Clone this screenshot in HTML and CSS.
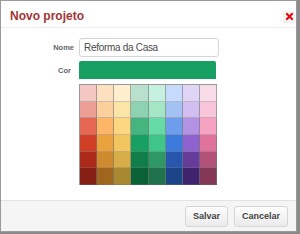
FILE: index.html
```html
<!DOCTYPE html>
<html>
<head>
<meta charset="utf-8">
<link rel="stylesheet" href="styles.css">
</head>
<body>
<div class="dialog">
  <div class="header">
    <div class="title">Novo projeto</div>
    <div class="close"><svg width="7" height="7" viewBox="0 0 8 8"><path d="M1 1L7 7M7 1L1 7" stroke="#e00" stroke-width="2.4" stroke-linecap="square"/></svg></div>
  </div>
  <div class="body">
    <div class="row">
      <div class="label">Nome</div>
      <div class="input">Reforma da Casa</div>
    </div>
    <div class="row row-cor">
      <div class="label">Cor</div>
      <div class="colcol">
        <div class="current"></div>
        <div class="palette">
          <div class="sw" style="background:#f4c7c3"></div><div class="sw" style="background:#fce0c0"></div><div class="sw" style="background:#fdefcd"></div><div class="sw" style="background:#b7e1cd"></div><div class="sw" style="background:#c6f0df"></div><div class="sw" style="background:#c6dafc"></div><div class="sw" style="background:#e1d5f5"></div><div class="sw" style="background:#fadce9"></div>
          <div class="sw" style="background:#ee9f95"></div><div class="sw" style="background:#fcd09c"></div><div class="sw" style="background:#fbe4a8"></div><div class="sw" style="background:#8dd3b2"></div><div class="sw" style="background:#a3e7c7"></div><div class="sw" style="background:#a4c1f4"></div><div class="sw" style="background:#d2bef1"></div><div class="sw" style="background:#f9c5d9"></div>
          <div class="sw" style="background:#e66752"></div><div class="sw" style="background:#fdb667"></div><div class="sw" style="background:#fbd781"></div><div class="sw" style="background:#46b47f"></div><div class="sw" style="background:#67dba7"></div><div class="sw" style="background:#6e9eeb"></div><div class="sw" style="background:#b492e3"></div><div class="sw" style="background:#f5a3c0"></div>
          <div class="sw" style="background:#d03f26"></div><div class="sw" style="background:#e9a23d"></div><div class="sw" style="background:#f1c65f"></div><div class="sw" style="background:#17a062"></div><div class="sw" style="background:#3fc588"></div><div class="sw" style="background:#3b79da"></div><div class="sw" style="background:#8e63cf"></div><div class="sw" style="background:#e0739a"></div>
          <div class="sw" style="background:#ad2a1b"></div><div class="sw" style="background:#cf8a2f"></div><div class="sw" style="background:#d7ad47"></div><div class="sw" style="background:#0f7e48"></div><div class="sw" style="background:#2d9765"></div><div class="sw" style="background:#2856ad"></div><div class="sw" style="background:#663c9b"></div><div class="sw" style="background:#b25177"></div>
          <div class="sw" style="background:#861f13"></div><div class="sw" style="background:#a1661e"></div><div class="sw" style="background:#a88830"></div><div class="sw" style="background:#0a6236"></div><div class="sw" style="background:#1f724b"></div><div class="sw" style="background:#1c4588"></div><div class="sw" style="background:#40236d"></div><div class="sw" style="background:#823755"></div>
        </div>
      </div>
    </div>
  </div>
  <div class="footer">
    <div class="btn">Salvar</div>
    <div class="btn">Cancelar</div>
  </div>
</div>
</body>
</html>
```
FILE: styles.css
```css
html, body {
  margin: 0;
  padding: 0;
  background: #8a8a8a;
}
body {
  width: 300px;
  height: 234px;
  overflow: hidden;
  font-family: "Liberation Sans", Arial, sans-serif;
}
.dialog {
  width: 295px;
  height: 230px;
  background: #fff;
  border: 1px solid #9a9a9a;
  display: flex;
  flex-direction: column;
}
.header {
  height: 26px;
  border-bottom: 1px solid #ececec;
  display: flex;
  align-items: center;
  justify-content: space-between;
  padding: 0 1px 0 9px;
}
.title {
  color: #a33535;
  font-weight: bold;
  font-size: 12px;
  margin-top: 4px;
}
.close {
  width: 12px;
  height: 12px;
  background: #f0f0f0;
  border-radius: 2px;
  display: flex;
  align-items: center;
  justify-content: center;
  margin-top: 5px;
}
.body {
  flex: 1;
  padding-top: 10px;
}
.row {
  display: flex;
  align-items: center;
}
.row-cor {
  align-items: flex-start;
  margin-top: 4px;
}
.label {
  width: 73px;
  text-align: right;
  font-size: 7.5px;
  font-weight: bold;
  color: #666;
  margin-right: 5px;
}
.row-cor .label {
  width: 70px;
  margin-right: 8px;
  margin-top: 5px;
}
.input {
  width: 134px;
  height: 17px;
  border: 1px solid #d4d4d4;
  border-radius: 3px;
  padding: 0 0 0 4px;
  font-size: 10px;
  letter-spacing: -0.3px;
  line-height: 17px;
  color: #4a4a4a;
}
.current {
  width: 137px;
  height: 18px;
  background: #17a062;
  border-radius: 2px 2px 0 0;
}
.palette {
  margin-top: 5px;
  width: 137px;
  display: grid;
  grid-template-columns: repeat(8, 1fr);
  grid-template-rows: repeat(6, 16.7px);
  background: #9a9a9a;
  border-left: 1px solid #999;
  border-top: 1px solid #999;
}
.sw {
  border-right: 1px solid rgba(120,120,120,0.6);
  border-bottom: 1px solid rgba(120,120,120,0.35);
}
.footer {
  height: 30px;
  background: #f5f5f5;
  border-top: 1px solid #e2e2e2;
  display: flex;
  justify-content: flex-end;
  align-items: center;
  gap: 6px;
  padding-right: 8px;
}
.btn {
  height: 19px;
  line-height: 19px;
  padding: 0 7px;
  font-size: 9px;
  font-weight: bold;
  color: #444;
  border: 1px solid #d6d6d6;
  border-radius: 3px;
  background: linear-gradient(#fdfdfd, #ebebeb);
}
```
